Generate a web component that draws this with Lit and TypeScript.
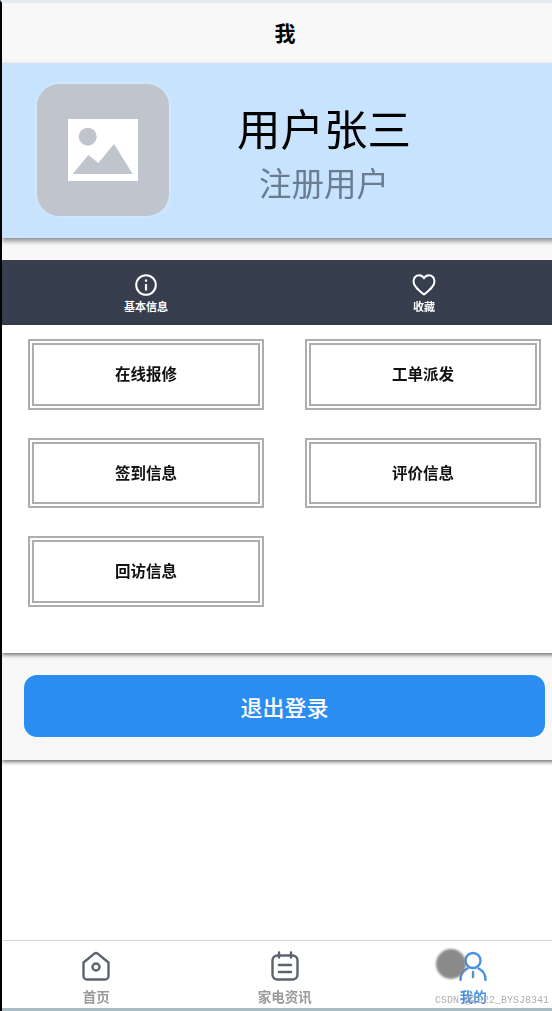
import { LitElement, html, css } from 'lit';
import { customElement } from 'lit/decorators.js';

const menu = ['在线报修', '工单派发', '签到信息', '评价信息', '回访信息'];

@customElement('app-root')
export class AppRoot extends LitElement {
  static styles = css`
    :host {
      display: block;
      width: 552px;
      height: 1011px;
      overflow: hidden;
      position: relative;
      background: #fff;
      font-family: "Liberation Sans", "Noto Sans CJK SC", sans-serif;
    }
    .frame {
      width: 566px;
      height: 1008px;
      display: flex;
      flex-direction: column;
      border-left: 2px solid #000;
      border-top: 3px solid #e4e8ef;
      filter: blur(0.6px);
    }
    .title {
      height: 60px;
      flex: none;
      box-sizing: border-box;
      padding-bottom: 2px;
      display: flex;
      align-items: center;
      justify-content: center;
      background: #f8f8f8;
      font-size: 21px;
      font-weight: 700;
      color: #000;
    }
    .profile {
      height: 175px;
      flex: none;
      display: flex;
      align-items: center;
      gap: 68px;
      padding-left: 35px;
      box-sizing: border-box;
      background: #c7e3fd;
      box-shadow: 0 3px 5px rgba(0, 0, 0, 0.45);
      position: relative;
    }
    .avatar {
      width: 132px;
      height: 132px;
      margin-top: -1px;
      border-radius: 22px;
      background: #bfc4cd;
      box-shadow: 0 0 5px rgba(255, 255, 255, 0.4);
      display: flex;
      align-items: center;
      justify-content: center;
    }
    .info {
      display: flex;
      flex-direction: column;
      align-items: center;
      margin-top: 9px;
    }
    .name {
      font-size: 43.5px;
      line-height: 60px;
      color: #000;
    }
    .role {
      font-size: 32.5px;
      line-height: 48px;
      color: #6b7c90;
    }
    .gap {
      height: 22px;
      flex: none;
      background: #f8f8f8;
    }
    .dark {
      height: 65px;
      flex: none;
      display: grid;
      grid-template-columns: 236px 236px;
      column-gap: 42px;
      padding-left: 26px;
      background: #373e4e;
      color: #fff;
    }
    .dark-item {
      display: flex;
      flex-direction: column;
      align-items: center;
      padding-top: 14px;
      font-size: 11px;
      font-weight: 700;
      line-height: 14px;
    }
    .dark-item svg {
      margin-bottom: 4px;
    }
    .menu {
      height: 328px;
      flex: none;
      box-sizing: border-box;
      display: grid;
      grid-template-columns: 236px 236px;
      grid-auto-rows: 70.5px;
      gap: 28px 41px;
      padding: 14px 0 0 26px;
      background: #fff;
      box-shadow: 0 2px 4px rgba(0, 0, 0, 0.55);
      position: relative;
      z-index: 1;
    }
    .menu-btn {
      border: 6px double #adadad;
      padding-bottom: 2px;
      display: flex;
      align-items: center;
      justify-content: center;
      font-size: 15.5px;
      font-weight: 700;
      color: #111;
    }
    .logout-wrap {
      height: 107px;
      flex: none;
      box-sizing: border-box;
      padding: 22px 23px 0 22px;
      background: #f8f8f8;
      box-shadow: 0 2px 4px rgba(0, 0, 0, 0.55);
      position: relative;
    }
    .logout {
      height: 62px;
      border-radius: 13px;
      background: #2b8cf2;
      color: #fff;
      display: flex;
      align-items: center;
      justify-content: center;
      font-size: 22px;
      font-weight: 500;
    }
    .spacer {
      flex: 1;
    }
    .tabs {
      height: 68px;
      flex: none;
      box-sizing: border-box;
      display: grid;
      grid-template-columns: repeat(3, 188.5px);
      border-top: 1px solid #d8d8d8;
      background: #fff;
    }
    .tab {
      display: flex;
      flex-direction: column;
      align-items: center;
      padding-top: 10px;
      font-size: 13.5px;
      font-weight: 700;
      line-height: 16px;
      color: #9a9a9a;
    }
    .tab svg {
      margin-bottom: 9px;
    }
    .tab.active {
      color: #4a90e2;
    }
    .bottom-line {
      height: 3px;
      flex: none;
      background: #a9bcc4;
    }
    .blob {
      position: absolute;
      left: 436px;
      top: 949px;
      width: 30px;
      height: 30px;
      border-radius: 50%;
      background: rgba(125, 125, 125, 0.9);
      filter: blur(1px);
    }
    .mark {
      position: absolute;
      right: 3px;
      top: 994px;
      font-family: "Liberation Mono", monospace;
      font-size: 10px;
      line-height: 14px;
      color: rgba(160, 160, 160, 0.85);
      white-space: nowrap;
    }
  `;

  render() {
    return html`
      <div class="frame">
        <div class="title">我</div>
        <section class="profile">
          <div class="avatar">
            <svg width="70" height="62" viewBox="0 0 70 62">
              <rect width="70" height="62" fill="#fff" />
              <circle cx="19.7" cy="17.7" r="9" fill="#bfc4cd" />
              <polygon points="4.7,55 20.3,36 30.3,44 46,25 64.7,55" fill="#bfc4cd" />
            </svg>
          </div>
          <div class="info">
            <div class="name">用户张三</div>
            <div class="role">注册用户</div>
          </div>
        </section>
        <div class="gap"></div>
        <section class="dark">
          <div class="dark-item">
            <svg width="22" height="22" viewBox="0 0 22 22" fill="none" stroke="#fff">
              <circle cx="11" cy="11" r="9.8" stroke-width="2" />
              <path d="M11 10v6.5" stroke-width="2.2" />
              <path d="M11 5.5v2.2" stroke-width="2.2" />
            </svg>
            基本信息
          </div>
          <div class="dark-item">
            <svg width="24" height="22" viewBox="0 0 24 22" fill="none" stroke="#fff" stroke-width="2">
              <path d="M12 20.500C7 16.500 1.500 12.500 1.500 7.200 1.500 3.800 4 1.300 7 1.300c2 0 3.800 1 5 3 1.200-2 3-3 5-3 3 0 5.500 2.500 5.500 5.900 0 5.300-5.500 9.300-10.500 13.300z" stroke-linejoin="round" />
            </svg>
            收藏
          </div>
        </section>
        <section class="menu">
          ${menu.map((m) => html`<div class="menu-btn">${m}</div>`)}
        </section>
        <section class="logout-wrap">
          <div class="logout">退出登录</div>
        </section>
        <div class="spacer"></div>
        <nav class="tabs">
          <div class="tab">
            <svg width="30" height="30" viewBox="0 0 30 30" fill="none" stroke="#5b6270" stroke-width="2.4">
              <path d="M2.500 11.500 13 2.800a3 3 0 0 1 4 0L27.500 11.500V25a3.500 3.500 0 0 1-3.500 3.500H6A3.500 3.500 0 0 1 2.500 25z" stroke-linejoin="round" />
              <circle cx="15" cy="16" r="3.5" />
            </svg>
            首页
          </div>
          <div class="tab">
            <svg width="30" height="30" viewBox="0 0 30 30" fill="none" stroke="#5b6270" stroke-width="2.4" stroke-linecap="round">
              <rect x="2.500" y="4.500" width="25" height="24" rx="5" />
              <path d="M9 1.500v5M21 1.500v5M9 14h12M9 21h12" />
            </svg>
            家电资讯
          </div>
          <div class="tab active">
            <svg width="30" height="30" viewBox="0 0 30 30" fill="none" stroke="#4a90e2" stroke-width="2.4" stroke-linecap="round">
              <circle cx="15" cy="9.500" r="7.500" />
              <path d="M2.500 29a12.500 12.500 0 0 1 7-11.500M27.500 29a12.500 12.500 0 0 0-7-11.500M15 21v5" />
            </svg>
            我的
          </div>
        </nav>
        <div class="bottom-line"></div>
      </div>
      <div class="blob"></div>
      <div class="mark">CSDN @2022_BYSJ8341</div>
    `;
  }
}
